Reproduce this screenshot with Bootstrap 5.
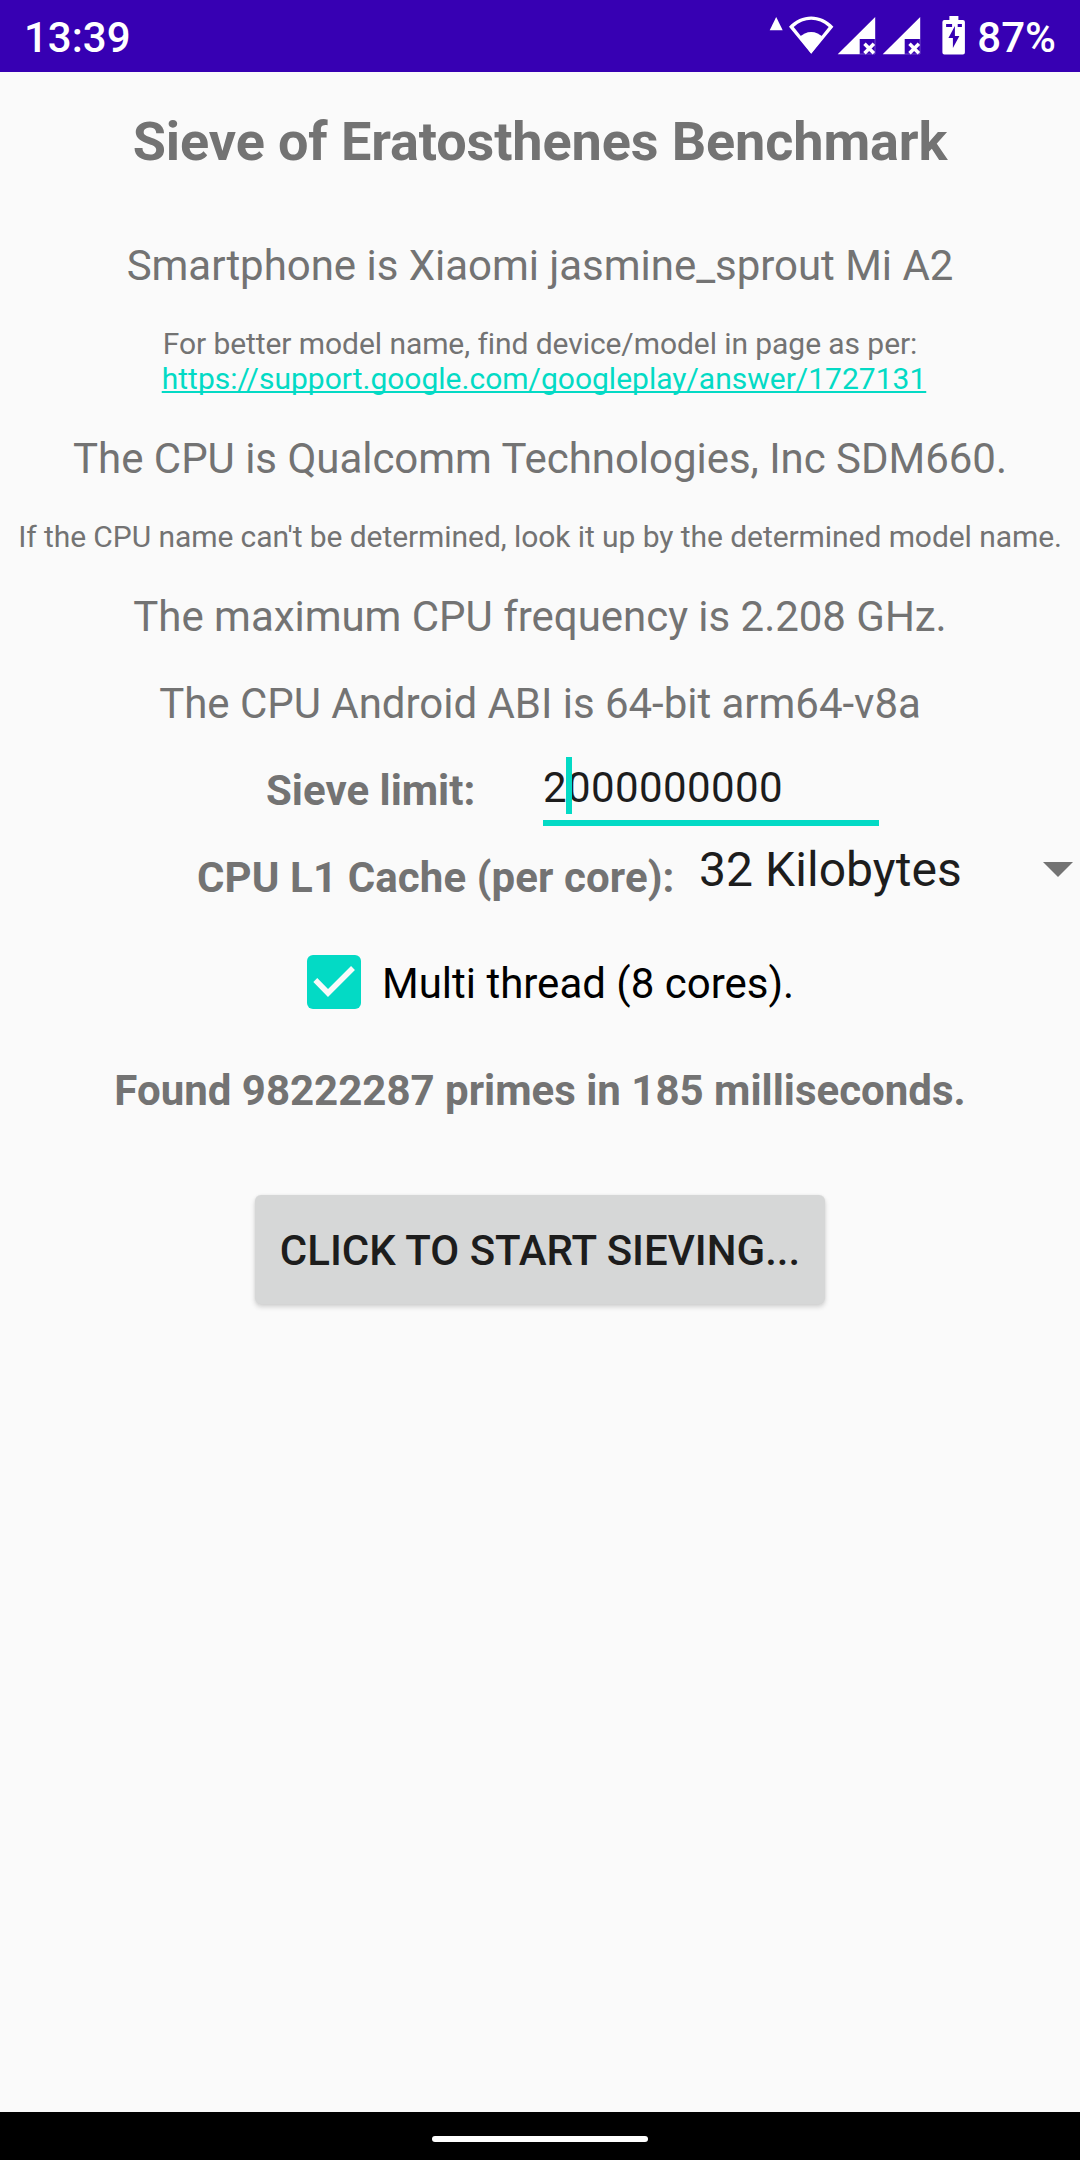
<!DOCTYPE html>
<html lang="en">
<head>
<meta charset="utf-8">
<meta name="viewport" content="width=device-width, initial-scale=1">
<title>Sieve of Eratosthenes Benchmark</title>
<link href="https://cdn.jsdelivr.net/npm/bootstrap@5.3.0/dist/css/bootstrap.min.css" rel="stylesheet">
<style>
  :root { --accent: #03dac5; --ink: #1d1d1d; --muted: #737373; }
  body { font-family: Roboto, "Noto Sans", sans-serif; font-size: 42px; line-height: 50px; color: var(--muted); background: #fafafa; }
  .screen { height: 2160px; }
  .status-bar { height: 72px; background: #3700b3; font-weight: 500; padding: 0 24px; line-height: 75px; }
  .status-icons { width: 204px; height: 72px; }
  .app-title { font-size: 54px; line-height: 64px; letter-spacing: -.11px; margin: 38px 0 67px; }
  .line-main { letter-spacing: -.03px; }
  .hint { font-size: 30px; line-height: 35px; letter-spacing: -.07px; }
  .hint a { color: var(--accent); text-decoration-thickness: 2px; text-underline-offset: 2px; text-decoration-skip-ink: none; letter-spacing: 0; }
  .model-hint { margin: 35px 0 38px; }
  .cpu-hint { margin: 35px 0 38px; }
  .freq-line { margin-bottom: 37px; }
  .limit-row { height: 90px; margin-top: 10px; padding-left: 266px; }
  .limit-label { width: 277px; padding-top: 27px; }
  .limit-input { width: 336px; height: 87px; border: 0; border-bottom: 6px solid var(--accent); border-radius: 0; padding: 15px 0 0; background: transparent; color: var(--ink); font-size: 42px; line-height: 50px; letter-spacing: .4px; }
  .caret { left: 23px; top: 18px; width: 6px; height: 57px; background: var(--accent); }
  .cache-row { height: 108px; padding-left: 197px; }
  .cache-label { width: 502px; padding-top: 24px; letter-spacing: .1px; }
  .cache-value { font-size: 48px; line-height: 56px; color: var(--ink); padding-top: 13px; letter-spacing: .06px; }
  .drop-arrow { width: 30px; height: 15px; margin: 33px 7px 0 auto; }
  .check-row { color: #000; padding-left: 307px; margin-top: 18px; height: 54px; }
  .check-row span { padding-top: 4px; }
  .check-box { width: 54px; height: 54px; margin-right: 21px; }
  .result-line { margin: 57px 0 79px; }
  .sieve-btn { --bs-btn-font-size: 42px; --bs-btn-font-weight: 500; --bs-btn-bg: #d6d7d7; --bs-btn-color: #1d1d1d; width: 570px; height: 109px; border: 0; border-radius: 6px; line-height: 50px; box-shadow: 0 3px 5px rgba(0,0,0,.16), 0 0 3px rgba(0,0,0,.06); }
  .sieve-btn span { display: block; padding-top: 2px; }
  .nav-strip { height: 48px; background: #000; }
  .nav-pill { width: 216px; height: 6px; border-radius: 3px; background: #fff; margin-top: 24px; }
</style>
</head>
<body>
<div class="screen d-flex flex-column">
  <header class="status-bar d-flex justify-content-between text-white">
    <span>13:39</span>
    <div class="d-flex">
      <svg class="status-icons" viewBox="769.300 0 204 72" fill="#fff">
        <path d="M776.5 17l6.5 13.3h-13z"/>
        <path fill-rule="evenodd" d="M811.5 53.8L789.3 26.800C802 13.200 821 13.200 833.700 26.800zM811.5 49L829 27C818.500 17.400 804.500 17.400 794 27z"/>
        <path d="M811.5 53.5L799.500 37.500C806 30 817 30 823.500 37.500z"/>
        <g id="signal"><path d="M838 54.200L875.500 17V39H860V54.200z"/><path d="M864.800 43.800L874.200 53.200M874.200 43.800L864.800 53.200" stroke="#fff" stroke-width="3.500"/><path d="M860 54H875.300V39" fill="none" stroke="#fff" stroke-opacity=".4" stroke-width=".7"/></g>
        <use href="#signal" x="45"/>
        <path transform="translate(.7 0)" fill-rule="evenodd" d="M949 16h9v4h4.500a2 2 0 0 1 2 2v30.500a2 2 0 0 1-2 2h-18.500a2 2 0 0 1-2-2V22a2 2 0 0 1 2-2h5zM945.700 24v3h6v-3zM957.300 24v3h4.200v-3zM954.500 26L948 38h4.500v10L959 36h-4.500z"/>
      </svg>
      <span class="ps-1">87%</span>
    </div>
  </header>

  <main class="flex-grow-1 d-flex flex-column">
    <h1 class="app-title fw-bold text-center">Sieve of Eratosthenes Benchmark</h1>
    <div class="line-main text-center">Smartphone is Xiaomi jasmine_sprout Mi A2</div>
    <div class="hint model-hint text-center">For better model name, find device/model in page as per:<br><a class="ms-2" href="#">https://support.google.com/googleplay/answer/1727131</a></div>
    <div class="line-main text-center">The CPU is Qualcomm Technologies, Inc SDM660.</div>
    <div class="hint cpu-hint text-center">If the CPU name can't be determined, look it up by the determined model name.</div>
    <div class="line-main freq-line text-center">The maximum CPU frequency is 2.208 GHz.</div>
    <div class="line-main text-center">The CPU Android ABI is 64-bit arm64-v8a</div>

    <div class="limit-row d-flex">
      <label class="limit-label fw-bold" for="limit">Sieve limit:</label>
      <div class="position-relative">
        <input id="limit" class="limit-input" type="text" value="2000000000">
        <span class="caret position-absolute"></span>
      </div>
    </div>

    <div class="cache-row d-flex">
      <div class="cache-label fw-bold">CPU L1 Cache (per core):</div>
      <div class="cache-value">32 Kilobytes</div>
      <svg class="drop-arrow" viewBox="0 0 30 15"><path d="M0 0h30L15 15z" fill="#737373"/></svg>
    </div>

    <div class="check-row d-flex align-items-center">
      <svg class="check-box" viewBox="0 0 54 54"><rect width="54" height="54" rx="6" fill="#03dac5"/><path d="M8.300 25L21 38L46 13" fill="none" stroke="#fafafa" stroke-width="5.500"/></svg>
      <span>Multi thread (8 cores).</span>
    </div>

    <div class="result-line fw-bold text-center">Found 98222287 primes in 185 milliseconds.</div>
    <button type="button" class="btn sieve-btn align-self-center p-0 text-uppercase"><span>Click to start sieving...</span></button>
  </main>

  <footer class="nav-strip d-flex justify-content-center"><div class="nav-pill"></div></footer>
</div>
<script src="https://cdn.jsdelivr.net/npm/bootstrap@5.3.0/dist/js/bootstrap.bundle.min.js"></script>
</body>
</html>
